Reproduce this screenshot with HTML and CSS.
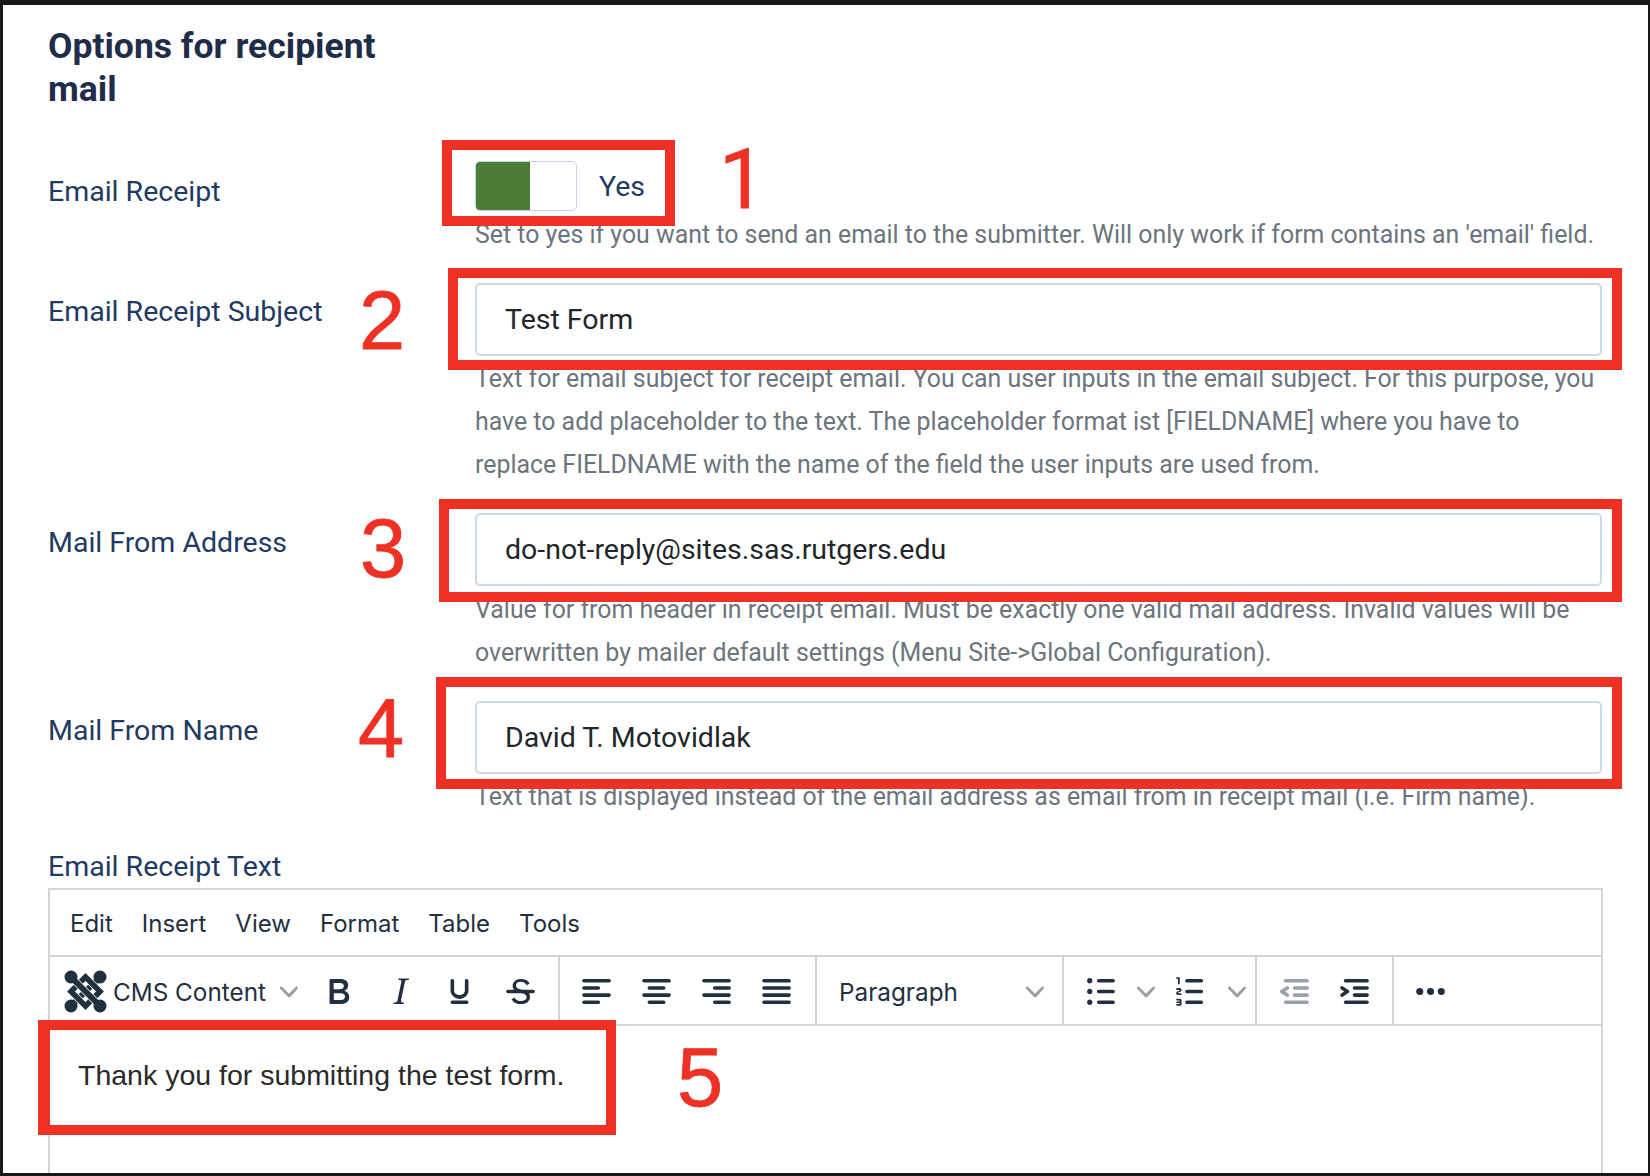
FILE: index.html
```html
<!DOCTYPE html>
<html lang="en">
  <head>
    <meta charset="UTF-8" />
    <meta name="viewport" content="width=device-width, initial-scale=1.0" />
    <title>Options for recipient mail</title>
    <link rel="stylesheet" href="styles.css">
  </head>
  <body>
    <main class="panel">
      <h2 class="title">Options for recipient<br>mail</h2>

      <div class="row row-first">
        <label class="label">Email Receipt</label>
        <div class="field">
          <div class="switch-wrap">
            <div class="switch"><span class="switch-on"></span></div>
            <span class="switch-text">Yes</span>
          </div>
          <p class="help">Set to yes if you want to send an email to the submitter. Will only work if form contains an 'email' field.</p>
        </div>
      </div>

      <div class="row row-second">
        <label class="label">Email Receipt Subject</label>
        <div class="field">
          <div class="input">Test Form</div>
          <p class="help">Text for email subject for receipt email. You can user inputs in the email subject. For this purpose, you have to add placeholder to the text. The placeholder format ist [FIELDNAME] where you have to replace FIELDNAME with the name of the field the user inputs are used from.</p>
        </div>
      </div>

      <div class="row">
        <label class="label">Mail From Address</label>
        <div class="field">
          <div class="input">do-not-reply@sites.sas.rutgers.edu</div>
          <p class="help">Value for from header in receipt email. Must be exactly one valid mail address. Invalid values will be overwritten by mailer default settings (Menu Site-&gt;Global Configuration).</p>
        </div>
      </div>

      <div class="row">
        <label class="label">Mail From Name</label>
        <div class="field">
          <div class="input">David T. Motovidlak</div>
          <p class="help">Text that is displayed instead of the email address as email from in receipt mail (i.e. Firm name).</p>
        </div>
      </div>

      <label class="label label-block">Email Receipt Text</label>
      <div class="editor">
        <div class="menubar">
          <span>Edit</span>
          <span>Insert</span>
          <span>View</span>
          <span>Format</span>
          <span>Table</span>
          <span>Tools</span>
        </div>
        <div class="toolbar">
          <div class="group group-format">
            <svg class="logo" viewBox="0 0 43 43">
              <g fill="none">
                <path d="M36 7 L7 36" stroke="#222f3e" stroke-width="6" />
                <path d="M21.5 7 L36 21.5 L21.5 36 L7 21.5 Z" stroke="#fff" stroke-width="7" />
                <path d="M21.5 7 L36 21.5 L21.5 36 L7 21.5 Z" stroke="#222f3e" stroke-width="5.5" />
                <path d="M11 11 L32 32" stroke="#fff" stroke-width="7.4" />
                <path d="M7 7 L36 36" stroke="#222f3e" stroke-width="6" />
              </g>
              <g fill="#222f3e">
                <circle cx="7" cy="7" r="6.5" />
                <circle cx="36" cy="7" r="6.5" />
                <circle cx="7" cy="36" r="6.5" />
                <circle cx="36" cy="36" r="6.5" />
              </g>
            </svg>
            <span class="tb-text cms">CMS Content</span>
            <svg class="chev" viewBox="0 0 10 10"><path d="M8.7 2.2c.3-.3.8-.3 1 0 .4.4.4.9 0 1.2L5.7 7.8c-.3.3-.9.3-1.2 0L.2 3.4a.8.8 0 0 1 0-1.2c.3-.3.8-.3 1.1 0L5 6l3.7-3.8z" /></svg>
            <svg class="ico ico-b" viewBox="0 0 24 24"><path fill-rule="evenodd" d="M7.8 19c-.3 0-.5 0-.6-.2l-.2-.5V5.7c0-.2 0-.4.2-.5l.6-.2h5c1.5 0 2.7.3 3.5 1 .7.6 1.1 1.4 1.1 2.5a3 3 0 0 1-.6 1.9c-.4.6-1 1-1.6 1.2.4.1.9.3 1.3.6s.8.7 1 1.2c.4.4.5 1 .5 1.6 0 1.3-.4 2.3-1.3 3-.8.7-2 1-3.8 1H7.8zm5-8.3c.6 0 1.2-.1 1.6-.5.4-.3.6-.7.6-1.3 0-1.1-.8-1.7-2.3-1.7H9.3v3.5h3.4zm.5 6c.7 0 1.3-.1 1.7-.4.4-.4.6-.9.6-1.5s-.2-1-.7-1.4c-.4-.3-1-.4-2-.4H9.4v3.8h4z" /></svg>
            <svg class="ico" viewBox="0 0 24 24"><path d="M16.7 4.7l-.1.9h-.3c-.6 0-1 0-1.4.3-.3.3-.4.6-.5 1.1l-2.1 9.8v.6c0 .5.4.8 1.4.8h.2l-.2.8H8l.2-.8h.2c1.1 0 1.8-.5 2-1.5l2-9.8.1-.5c0-.6-.4-.8-1.4-.8h-.3l.2-.9h5.8z" /></svg>
            <svg class="ico ico-u" viewBox="0 0 24 24"><path d="M16 5c.6 0 1 .4 1 1v5.5a4 4 0 0 1-.4 1.8l-1 1.4a5.3 5.3 0 0 1-5.5 1 5 5 0 0 1-1.6-1c-.5-.4-.8-.9-1.1-1.4a4 4 0 0 1-.4-1.8V6c0-.6.4-1 1-1s1 .4 1 1v5.5c0 .3 0 .6.2 1l.6.7a3.3 3.3 0 0 0 2.2.8 3.4 3.4 0 0 0 2.2-.8c.3-.2.4-.5.6-.8l.2-.9V6c0-.6.4-1 1-1zM8 17h8c.6 0 1 .4 1 1s-.4 1-1 1H8a1 1 0 0 1 0-2z" /></svg>
            <svg class="ico ico-s" viewBox="0 0 24 24"><path fill-rule="evenodd" d="M15.6 8.5c-.5-.7-1-1.1-1.3-1.3-.6-.4-1.3-.6-2-.6-2.7 0-2.8 1.7-2.8 2.1 0 1.6 1.8 2 3.2 2.3 4.4.9 4.6 2.8 4.6 3.9 0 1.4-.7 4.1-5 4.1A6.2 6.2 0 0 1 7 16.4l1.5-1.1c.4.6 1.6 2 3.7 2 1.6 0 2.5-.4 3-1.2.4-.8.3-2-.8-2.6-.7-.4-1.6-.7-2.9-1-1-.2-3.9-.8-3.9-3.6C7.6 6 10.3 5 12.4 5c2.9 0 4.2 1.6 4.7 2.4l-1.5 1.1z" /><path d="M5 11h14a1 1 0 0 1 0 2H5a1 1 0 0 1 0-2z" /></svg>
          </div>
          <div class="group group-align">
            <svg class="ico" viewBox="0 0 24 24"><path d="M5 5h14c.6 0 1 .4 1 1s-.4 1-1 1H5a1 1 0 1 1 0-2zm0 4h8c.6 0 1 .4 1 1s-.4 1-1 1H5a1 1 0 1 1 0-2zm0 8h8c.6 0 1 .4 1 1s-.4 1-1 1H5a1 1 0 0 1 0-2zm0-4h14c.6 0 1 .4 1 1s-.4 1-1 1H5a1 1 0 0 1 0-2z" /></svg>
            <svg class="ico" viewBox="0 0 24 24"><path d="M5 5h14c.6 0 1 .4 1 1s-.4 1-1 1H5a1 1 0 1 1 0-2zm3 4h8c.6 0 1 .4 1 1s-.4 1-1 1H8a1 1 0 1 1 0-2zm0 8h8c.6 0 1 .4 1 1s-.4 1-1 1H8a1 1 0 0 1 0-2zm-3-4h14c.6 0 1 .4 1 1s-.4 1-1 1H5a1 1 0 0 1 0-2z" /></svg>
            <svg class="ico" viewBox="0 0 24 24"><path d="M5 5h14c.6 0 1 .4 1 1s-.4 1-1 1H5a1 1 0 1 1 0-2zm6 4h8c.6 0 1 .4 1 1s-.4 1-1 1h-8a1 1 0 0 1 0-2zm0 8h8c.6 0 1 .4 1 1s-.4 1-1 1h-8a1 1 0 0 1 0-2zm-6-4h14c.6 0 1 .4 1 1s-.4 1-1 1H5a1 1 0 0 1 0-2z" /></svg>
            <svg class="ico" viewBox="0 0 24 24"><path d="M5 5h14c.6 0 1 .4 1 1s-.4 1-1 1H5a1 1 0 1 1 0-2zm0 4h14c.6 0 1 .4 1 1s-.4 1-1 1H5a1 1 0 1 1 0-2zm0 4h14c.6 0 1 .4 1 1s-.4 1-1 1H5a1 1 0 0 1 0-2zm0 4h14c.6 0 1 .4 1 1s-.4 1-1 1H5a1 1 0 0 1 0-2z" /></svg>
          </div>
          <div class="group group-select">
            <span class="tb-text">Paragraph</span>
            <svg class="chev" viewBox="0 0 10 10"><path d="M8.7 2.2c.3-.3.8-.3 1 0 .4.4.4.9 0 1.2L5.7 7.8c-.3.3-.9.3-1.2 0L.2 3.4a.8.8 0 0 1 0-1.2c.3-.3.8-.3 1.1 0L5 6l3.7-3.8z" /></svg>
          </div>
          <div class="group group-lists">
            <svg class="ico" viewBox="0 0 24 24"><path d="M11 5h8c.6 0 1 .4 1 1s-.4 1-1 1h-8a1 1 0 0 1 0-2zm0 6h8c.6 0 1 .4 1 1s-.4 1-1 1h-8a1 1 0 0 1 0-2zm0 6h8c.6 0 1 .4 1 1s-.4 1-1 1h-8a1 1 0 0 1 0-2zM4.5 6c0-.4.1-.8.4-1 .3-.4.7-.5 1.1-.5.4 0 .8.1 1 .4.4.3.5.7.5 1.1 0 .4-.1.8-.4 1-.3.4-.7.5-1.1.5-.4 0-.8-.1-1-.4-.4-.3-.5-.7-.5-1.1zm0 6c0-.4.1-.8.4-1 .3-.4.7-.5 1.1-.5.4 0 .8.1 1 .4.4.3.5.7.5 1.1 0 .4-.1.8-.4 1-.3.4-.7.5-1.1.5-.4 0-.8-.1-1-.4-.4-.3-.5-.7-.5-1.1zm0 6c0-.4.1-.8.4-1 .3-.4.7-.5 1.1-.5.4 0 .8.1 1 .4.4.3.5.7.5 1.1 0 .4-.1.8-.4 1-.3.4-.7.5-1.1.5-.4 0-.8-.1-1-.4-.4-.3-.5-.7-.5-1.1z" /></svg>
            <svg class="chev chev-list" viewBox="0 0 10 10"><path d="M8.7 2.2c.3-.3.8-.3 1 0 .4.4.4.9 0 1.2L5.7 7.8c-.3.3-.9.3-1.2 0L.2 3.4a.8.8 0 0 1 0-1.2c.3-.3.8-.3 1.1 0L5 6l3.7-3.8z" /></svg>
            <svg class="ico ico-ol" viewBox="0 0 24 24"><path d="M10 17h8c.6 0 1 .4 1 1s-.4 1-1 1h-8a1 1 0 0 1 0-2zm0-6h8c.6 0 1 .4 1 1s-.4 1-1 1h-8a1 1 0 0 1 0-2zm0-6h8c.6 0 1 .4 1 1s-.4 1-1 1h-8a1 1 0 1 1 0-2zM6 4v3.5c0 .3-.2.5-.5.5a.5.5 0 0 1-.5-.5V5h-.5a.5.5 0 0 1 0-1H6zm-1 8.8l.2.2h1.3c.3 0 .5.2.5.5s-.2.5-.5.5H4.9a1 1 0 0 1-.9-1V13c0-.4.3-.8.6-1l1.2-.4.2-.3a.2.2 0 0 0-.2-.2H4.5a.5.5 0 0 1-.5-.5c0-.3.2-.5.5-.5h1.6c.5 0 .9.4.9 1v.1c0 .4-.3.8-.6 1l-1.2.4-.2.3zM7 17v2c0 .6-.4 1-1 1H4.5a.5.5 0 0 1 0-1h1.2c.2 0 .3-.1.3-.3 0-.2-.1-.3-.3-.3H4.4a.4.4 0 1 1 0-.8h1.3c.2 0 .3-.1.3-.3 0-.2-.1-.3-.3-.3H4.5a.5.5 0 1 1 0-1H6c.6 0 1 .4 1 1z" /></svg>
            <svg class="chev chev-list" viewBox="0 0 10 10"><path d="M8.7 2.2c.3-.3.8-.3 1 0 .4.4.4.9 0 1.2L5.7 7.8c-.3.3-.9.3-1.2 0L.2 3.4a.8.8 0 0 1 0-1.2c.3-.3.8-.3 1.1 0L5 6l3.7-3.8z" /></svg>
          </div>
          <div class="group group-indent">
            <svg class="ico ico-off" viewBox="0 0 24 24"><path d="M7 5h12c.6 0 1 .4 1 1s-.4 1-1 1H7a1 1 0 1 1 0-2zm5 4h7c.6 0 1 .4 1 1s-.4 1-1 1h-7a1 1 0 0 1 0-2zm0 4h7c.6 0 1 .4 1 1s-.4 1-1 1h-7a1 1 0 0 1 0-2zm-5 4h12a1 1 0 0 1 0 2H7a1 1 0 0 1 0-2zm1.6-3.8a1 1 0 0 1-1.2 1.6l-3-2a1 1 0 0 1 0-1.6l3-2a1 1 0 0 1 1.2 1.6L6.8 12l1.8 1.2z" /></svg>
            <svg class="ico" viewBox="0 0 24 24"><path d="M7 5h12c.6 0 1 .4 1 1s-.4 1-1 1H7a1 1 0 1 1 0-2zm5 4h7c.6 0 1 .4 1 1s-.4 1-1 1h-7a1 1 0 0 1 0-2zm0 4h7c.6 0 1 .4 1 1s-.4 1-1 1h-7a1 1 0 0 1 0-2zm-5 4h12a1 1 0 0 1 0 2H7a1 1 0 0 1 0-2zm-2.6-3.8L6.2 12l-1.8-1.2a1 1 0 0 1 1.2-1.6l3 2a1 1 0 0 1 0 1.6l-3 2a1 1 0 1 1-1.2-1.6z" /></svg>
          </div>
          <div class="group group-more">
            <svg class="ico" viewBox="0 0 24 24"><path d="M6 10a2 2 0 0 0-2 2c0 1.1.9 2 2 2a2 2 0 0 0 2-2 2 2 0 0 0-2-2zm12 0a2 2 0 0 0-2 2c0 1.1.9 2 2 2a2 2 0 0 0 2-2 2 2 0 0 0-2-2zm-6 0a2 2 0 0 0-2 2c0 1.1.9 2 2 2a2 2 0 0 0 2-2 2 2 0 0 0-2-2z" /></svg>
          </div>
        </div>
        <div class="content">Thank you for submitting the test form.</div>
      </div>
    </main>

    <!-- red notes drawn over the screenshot -->
    <div class="mark mark-1"></div>
    <div class="mark mark-2"></div>
    <div class="mark mark-3"></div>
    <div class="mark mark-4"></div>
    <div class="mark mark-5"></div>
    <span class="num num-1">1</span>
    <span class="num num-2">2</span>
    <span class="num num-3">3</span>
    <span class="num num-4">4</span>
    <span class="num num-5">5</span>
  </body>
</html>
```

FILE: styles.css
```css
* {
  box-sizing: border-box;
}
body {
  margin: 0;
  height: 1176px;
  overflow: hidden;
  position: relative;
  background-color: #18181a;
  font-family: Roboto, "Liberation Sans", sans-serif;
}
.panel {
  margin: 5px 2px 3px 3px;
  height: 1168px;
  padding: 20px 45px 0 45px;
  background-color: #fff;
  overflow: hidden;
}
.title {
  margin: 0 0 50px 0;
  font-size: 35.5px;
  line-height: 43px;
  font-weight: 700;
  color: #1f2d4a;
}
.row {
  display: grid;
  grid-template-columns: 427px 1127px;
  margin-bottom: 27px;
}
.label {
  display: block;
  padding-top: 8px;
  font-size: 28.5px;
  line-height: 43px;
  color: #1f3a63;
}
.row-first .label {
  padding-top: 9px;
}
.row-second .label {
  padding-top: 7px;
}
.label-block {
  padding-top: 0;
  line-height: 43px;
}
.switch-wrap {
  display: flex;
  align-items: center;
  height: 50px;
}
.switch {
  width: 102px;
  height: 50px;
  border: 1px solid #c8d2e4;
  border-radius: 5px;
  overflow: hidden;
  background-color: #fff;
}
.switch-on {
  display: block;
  width: 54px;
  height: 100%;
  background-color: #4a7c38;
}
.switch-text {
  margin-left: 22px;
  font-size: 28.5px;
  color: #1f3a63;
}
.help {
  margin: 1.5px 0 0 0;
  font-size: 24.9px;
  line-height: 43px;
  color: #6c757d;
}
.input {
  height: 73px;
  padding-left: 28px;
  border: 2px solid #d1d9e8;
  border-radius: 5px;
  display: flex;
  align-items: center;
  font-size: 28.5px;
  color: #22262a;
}
.editor {
  width: 1555px;
  height: 400px;
  border: 2px solid #d4d4d4;
  font-family: Inter, Roboto, sans-serif;
  color: #222f3e;
}
.menubar {
  display: flex;
  align-items: center;
  height: 67px;
  padding-top: 1px;
  padding-left: 20px;
  gap: 29px;
  font-size: 24px;
  border-bottom: 2px solid #d4d4d4;
}
.toolbar {
  display: flex;
  height: 69px;
  border-bottom: 2px solid #d4d4d4;
}
.group {
  display: flex;
  align-items: center;
  height: 100%;
  padding-top: 2px;
  border-right: 2px solid #d4d4d4;
}
.group-format {
  width: 510px;
  padding-left: 14px;
}
.group-align {
  width: 257px;
  padding-left: 15px;
  gap: 17px;
}
.group-select {
  width: 247px;
  padding-left: 22px;
  justify-content: space-between;
  padding-right: 18px;
}
.group-lists {
  width: 193px;
  padding-left: 15px;
}
.group-indent {
  width: 137px;
  padding-left: 16px;
  gap: 17px;
}
.group-more {
  padding-left: 15px;
  border-right: none;
}
.logo {
  width: 43px;
  height: 43px;
}
.ico {
  width: 43px;
  height: 43px;
  margin-right: 16px;
  fill: #222f3e;
}
.group-align .ico,
.group-indent .ico {
  margin-right: 0;
}
.ico-b {
  margin-left: 19px;
  margin-right: 19px;
}
.ico-u {
  margin-right: 18px;
}
.ico-s {
  margin-right: 0;
}
.ico-off {
  opacity: 0.45;
}
.ico-ol {
  margin-left: 14px;
  margin-right: 0;
}
.tb-text {
  font-size: 24.3px;
}
.cms {
  margin-left: 6px;
}
.chev {
  width: 18px;
  height: 18px;
  fill: #9a9fa6;
  flex: none;
}
.group-format .chev {
  margin-left: 14px;
}
.group-lists .ico {
  margin-right: 15px;
}
.group-lists .ico-ol {
  margin-right: 16px;
}
.content {
  padding: 31px 0 0 28px;
  font-family: "Liberation Sans", Arial, sans-serif;
  font-size: 28.5px;
  line-height: 36px;
  color: #2a2a2a;
}
.mark {
  position: absolute;
  border: 10px solid #ee3124;
}
.mark-1 { left: 442px; top: 140px; width: 233px; height: 86px; }
.mark-2 { left: 448px; top: 268px; width: 1174px; height: 102px; }
.mark-3 { left: 439px; top: 499px; width: 1183px; height: 103px; }
.mark-4 { left: 436px; top: 677px; width: 1186px; height: 112px; }
.mark-5 { left: 38px; top: 1020px; width: 578px; height: 115px; border-left-width: 12px; }
.num {
  position: absolute;
  font-family: "Liberation Sans", Arial, sans-serif;
  font-size: 83px;
  line-height: 83px;
  color: #ee3124;
  -webkit-text-stroke: 0.8px #ee3124;
}
.num-1 { left: 719px; top: 138px; font-family: Roboto, sans-serif; }
.num-2 { left: 359px; top: 279px; }
.num-3 { left: 360px; top: 507px; }
.num-4 { left: 358px; top: 687px; }
.num-5 { left: 677px; top: 1036px; }
```
